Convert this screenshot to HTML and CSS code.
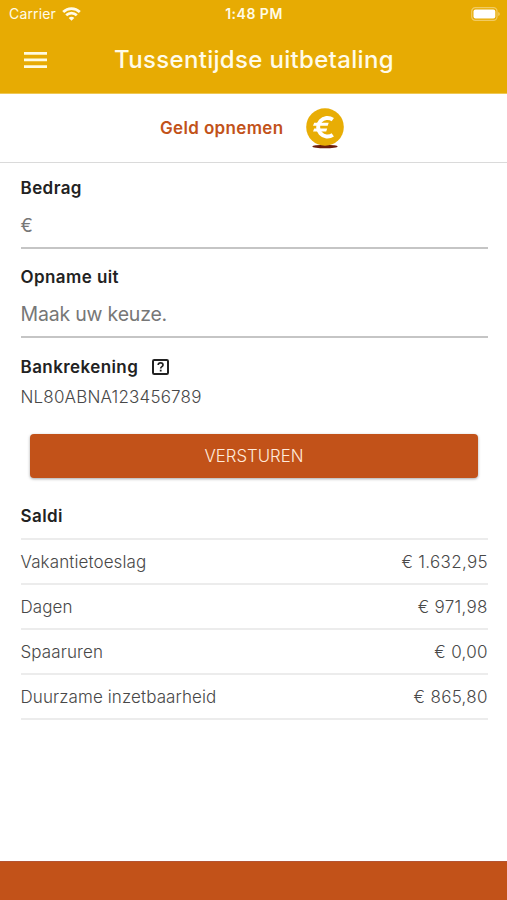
FILE: index.html
```html
<!DOCTYPE html>
<html lang="nl">
<head>
<meta charset="utf-8">
<title>Tussentijdse uitbetaling</title>
<link rel="stylesheet" href="styles.css">
</head>
<body>
<div class="app">
  <header class="header">
    <div class="status">
      <div class="carrier"><span>Carrier</span>
        <svg class="wifi" width="19" height="14" viewBox="0 0 19 14" fill="none" stroke="#fffbe9" stroke-width="2.7"><path d="M1.2 5C5.8.4 13.2.4 17.8 5M4.2 8.3c3-2.9 7.6-2.9 10.6 0"/><path d="M9.5 13.7 6.7 10.9c1.6-1.5 4-1.5 5.6 0z" fill="#fffbe9" stroke="none"/></svg>
      </div>
      <span class="time">1:48 PM</span>
      <svg class="battery" width="30" height="14" viewBox="0 0 30 14"><rect x=".7" y=".7" width="25.3" height="12.6" rx="3.6" fill="none" stroke="#f1cb62" stroke-width="1.2"/><rect x="2.5" y="2.5" width="21.8" height="9" rx="2" fill="#fff"/><path d="M27.3 5v4c1.9-.7 1.9-3.3 0-4z" fill="#f3d274"/></svg>
    </div>
    <div class="toolbar">
      <svg class="menu" width="23" height="16" viewBox="0 0 23 16" fill="#fffbe0"><path d="M0 0h23v2.7H0zM0 6.6h23v2.7H0zM0 13.2h23v2.7H0z"/></svg>
      <h1 class="title">Tussentijdse uitbetaling</h1>
    </div>
  </header>
  <section class="action">
    <span class="action-label">Geld opnemen</span>
    <svg class="coin" width="38" height="41" viewBox="0 0 38 41"><ellipse cx="19" cy="38.5" rx="12.7" ry="1.8" fill="#6d1d0c"/><circle cx="19" cy="19" r="18.8" fill="#e8ad05"/><path d="M26.8 11.6A9.3 9.3 0 1 0 26.8 26.8" fill="none" stroke="#fff" stroke-width="4"/><path d="M8.2 14.8h14.5l-1 3H7zM8.2 20.4h13l-1 3H7z" fill="#fff"/></svg>
  </section>
  <main class="content">
    <label class="label bedrag">Bedrag</label>
    <div class="field euro">€</div>
    <label class="label opname">Opname uit</label>
    <div class="field choice">Maak uw keuze.</div>
    <div class="label account"><span>Bankrekening</span>
      <svg class="help" width="17" height="16" viewBox="0 0 17 16" fill="none" stroke="#222" stroke-width="2"><rect x="1" y="1" width="15" height="14" rx="1.2"/><path d="M6.2 6c.1-3.1 4.8-2.7 4.8-.1 0 1.8-2.3 1.7-2.3 3.6" stroke-width="1.7"/><path d="M8.7 10.7v1.8" stroke-width="1.8"/></svg>
    </div>
    <div class="iban">NL80ABNA123456789</div>
    <button class="submit">VERSTUREN</button>
    <h2 class="label saldi">Saldi</h2>
    <dl class="balances">
      <div class="row"><dt>Vakantietoeslag</dt><dd>€ 1.632,95</dd></div>
      <div class="row"><dt>Dagen</dt><dd>€ 971,98</dd></div>
      <div class="row"><dt>Spaaruren</dt><dd>€ 0,00</dd></div>
      <div class="row"><dt>Duurzame inzetbaarheid</dt><dd>€ 865,80</dd></div>
    </dl>
  </main>
  <footer class="footer"></footer>
</div>
</body>
</html>
```
FILE: styles.css
```css
* { box-sizing: border-box; margin: 0; padding: 0; }
body { font-family: Inter, "Liberation Sans", sans-serif; background: #fff; }
.app { height: 900px; display: flex; flex-direction: column; overflow: hidden; }
.header { height: 94px; background: #e7ab03; color: #fffbe9; border-bottom: 1px solid #efc854; }
.status { height: 27px; display: grid; grid-template-columns: 1fr auto 1fr; align-items: center; padding: 0 6px 0 9px; font-size: 14px; }
.carrier { display: flex; align-items: center; gap: 6px; letter-spacing: .15px; }
.time { font-weight: 600; font-size: 14px; letter-spacing: .5px; margin-right: 2px; }
.battery { justify-self: end; }
.toolbar { height: 65px; display: flex; align-items: center; padding-left: 24px; }
.menu { margin-right: 67px; }
.title { font-size: 24px; font-weight: 500; line-height: 30px; letter-spacing: .32px; white-space: nowrap; }
.action { height: 69px; border-bottom: 1px solid #dadada; display: flex; align-items: center; padding-left: 160px; gap: 22px; }
.action-label { color: #c25219; font-weight: 600; font-size: 17px; letter-spacing: .35px; white-space: nowrap; }
.content { flex: 1; padding: 12px 19.5px 0 20.5px; }
.label { display: block; font-size: 17px; line-height: 26px; font-weight: 600; letter-spacing: .42px; color: #222; }
.field { height: 48px; border-bottom: 2px solid #c5c5c5; color: #777; font-size: 19.5px; line-height: 48px; letter-spacing: -.2px; margin-bottom: 15px; }
.choice { margin-bottom: 16px; }
.euro { font-size: 18.5px; }
.account { display: flex; align-items: center; gap: 14px; }
.iban { height: 34px; line-height: 34px; font-size: 17px; font-weight: 300; letter-spacing: .18px; color: #484848; }
.submit { display: block; width: 448px; height: 44px; margin: 20px 0 25px 9.5px; border: 0; border-radius: 4px; background: #c25219; color: #ffeadb; font: 300 16.8px/44px Inter, sans-serif; box-shadow: 0 1px 3px rgba(0,0,0,.35); }
.balances { margin-top: 9px; border-top: 2px solid #ececec; }
.row { height: 45.1px; display: flex; justify-content: space-between; align-items: center; border-bottom: 2px solid #ececec; font-size: 17px; font-weight: 300; letter-spacing: .1px; color: #484848; }
.row dd { letter-spacing: .3px; margin-right: -.3px; }
.footer { height: 39px; background: #c25219; border-top: 1px solid #b45432; }
```
